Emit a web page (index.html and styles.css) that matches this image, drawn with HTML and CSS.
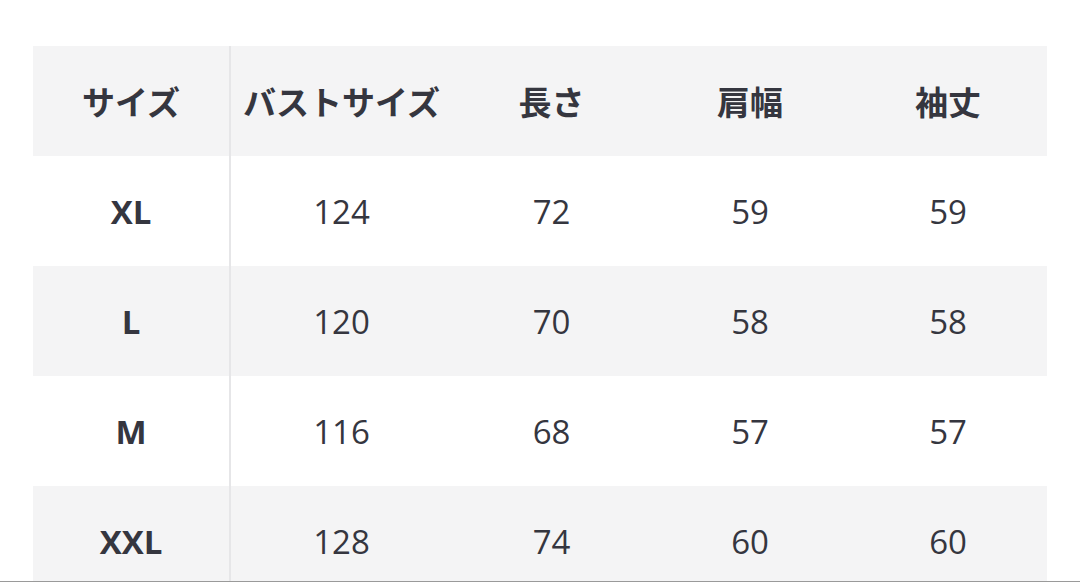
FILE: index.html
```html
<!DOCTYPE html>
<html lang="ja">
<head>
<meta charset="utf-8">
<link rel="stylesheet" href="styles.css">
</head>
<body>
<div class="page">
  <table class="size-table">
    <colgroup>
      <col class="c1"><col class="c2"><col class="c3"><col class="c4"><col class="c5">
    </colgroup>
    <thead>
      <tr class="shade"><th class="first">サイズ</th><th>バストサイズ</th><th>長さ</th><th>肩幅</th><th>袖丈</th></tr>
    </thead>
    <tbody>
      <tr><th class="first">XL</th><td>124</td><td>72</td><td>59</td><td>59</td></tr>
      <tr class="shade"><th class="first">L</th><td>120</td><td>70</td><td>58</td><td>58</td></tr>
      <tr><th class="first">M</th><td>116</td><td>68</td><td>57</td><td>57</td></tr>
      <tr class="shade"><th class="first">XXL</th><td>128</td><td>74</td><td>60</td><td>60</td></tr>
    </tbody>
  </table>
</div>
</body>
</html>
```
FILE: styles.css
```css
html, body {
  margin: 0;
  padding: 0;
  background: #ffffff;
}
.page {
  height: 582px;
  overflow: hidden;
  border-bottom: 1px solid #9a9a9a;
  padding: 46px 0 0 33px;
  box-sizing: border-box;
}
.size-table {
  border-collapse: collapse;
  table-layout: fixed;
  width: 1014px;
  font-family: "Open Sans", "Noto Sans CJK JP", sans-serif;
  color: #35363f;
}
.c1 { width: 197px; }
.c2 { width: 222px; }
.c3 { width: 199px; }
.c4 { width: 198px; }
.c5 { width: 198px; }
.size-table th,
.size-table td {
  height: 110px;
  padding: 0;
  text-align: center;
  vertical-align: middle;
  font-size: 33px;
  line-height: 1;
}
.size-table th {
  font-weight: 700;
}
.size-table thead th {
  font-family: "Noto Sans CJK JP", sans-serif;
  font-size: 33px;
  font-weight: 700;
}
.size-table td {
  font-weight: 400;
}
.size-table .first {
  border-right: 2px solid #e6e6e8;
}
.shade {
  background: #f4f4f5;
}
```
